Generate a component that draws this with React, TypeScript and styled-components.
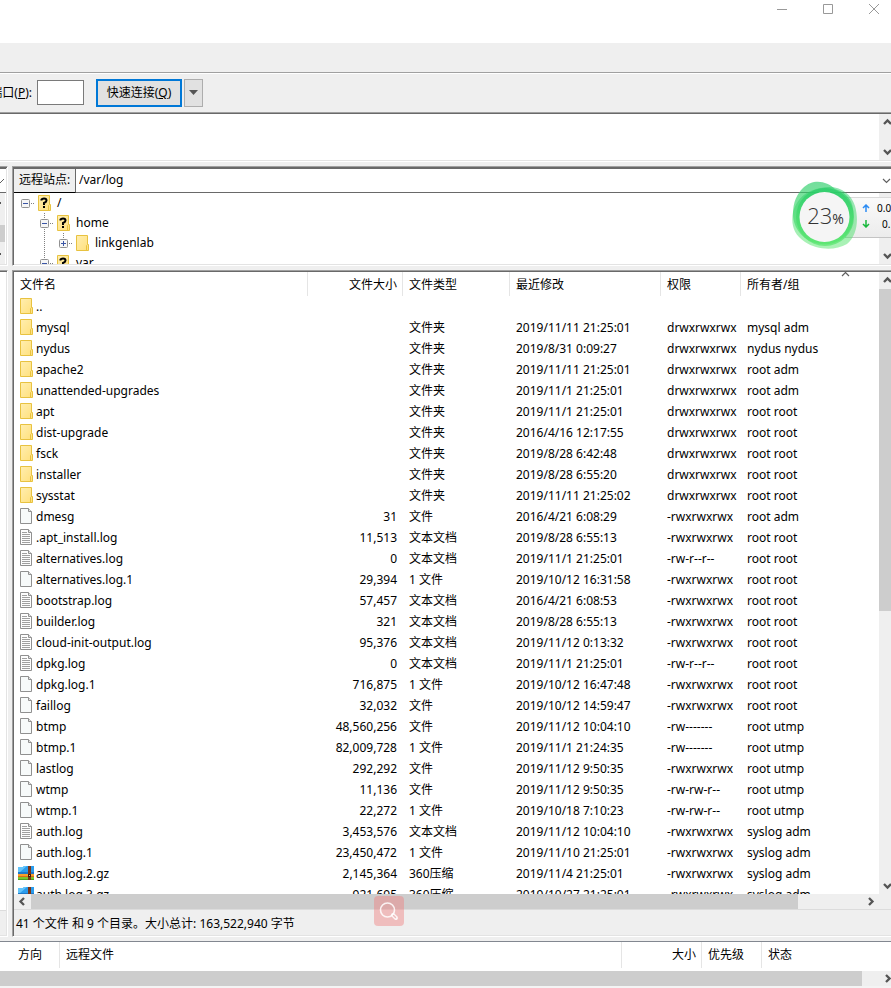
import React from "react";
import styled, { createGlobalStyle, css } from "styled-components";

const GlobalStyle = createGlobalStyle`
  * { box-sizing: border-box; }
  html, body, #root { height: 100%; }
  body {
    margin: 0;
    overflow: hidden;
    background: #efefef;
    color: #000;
    font: 12px/20px "Noto Sans", "Noto Sans CJK SC", sans-serif;
  }
  button, input { font: inherit; color: inherit; }
  svg { display: block; flex: none; }
`;

const Window = styled.div`
  position: relative;
  display: flex;
  flex-direction: column;
  height: 100vh;
  overflow: hidden;
  white-space: nowrap;
`;

const TitleBar = styled.header`
  flex: none;
  display: flex;
  justify-content: flex-end;
  height: 43px;
  overflow: hidden;
  background: #fff;
`;

const Captions = styled.div`
  display: flex;
  margin-right: -6px;
`;

const CaptionButton = styled.button`
  display: flex;
  justify-content: center;
  width: 46px;
  height: 18px;
  padding: 4px 0 0;
  border: 0;
  background: none;
`;

const ToolStrip = styled.div`
  flex: none;
  height: 30px;
  border-bottom: 1px solid #a0a0a0;
`;

const QuickConnect = styled.form`
  flex: none;
  display: flex;
  align-items: center;
  height: 39px;
  padding-bottom: 1px;
  border-top: 1px solid #fff;
`;

const PortLabel = styled.label`
  display: flex;
  justify-content: flex-end;
  width: 32px;
  overflow: hidden;
`;

const PortInput = styled.input`
  width: 47px;
  height: 25px;
  margin: 0 12px 0 5px;
  border: 1px solid #7a7a7a;
  background: #fff;
`;

const ConnectButton = styled.button`
  width: 86px;
  height: 28px;
  padding: 0;
  border: 2px solid #0078d7;
  background: #e1e1e1;
  line-height: 22px;
`;

const HistoryButton = styled.button`
  display: flex;
  align-items: center;
  justify-content: center;
  width: 19px;
  height: 28px;
  margin-left: 2px;
  padding: 0;
  border: 1px solid #adadad;
  background: #e1e1e1;
`;

const MessageLog = styled.section`
  flex: none;
  display: flex;
  justify-content: flex-end;
  height: 50px;
  background: #fff;
  border-top: 1px solid #a0a0a0;
  border-bottom: 1px solid #fff;
  box-shadow: inset 0 1px #696969, inset 0 -1px #e3e3e3;
  padding: 1px 0;
`;

const Scroller = styled.div`
  flex: none;
  display: flex;
  flex-direction: column;
  justify-content: space-between;
  width: 12px;
  overflow: hidden;
  background: #efefef;
`;

const ArrowButton = styled.button<{ $wide?: boolean }>`
  flex: none;
  display: flex;
  align-items: center;
  justify-content: flex-start;
  width: 17px;
  height: ${(p) => (p.$wide ? 15 : 17)}px;
  padding: 0 0 0 4px;
  border: 0;
  background: none;
`;

const VerticalThumb = styled.div`
  flex: none;
  height: 322px;
  margin-bottom: auto;
  background: #cdcdcd;
`;

const Workspace = styled.main`
  flex: 1;
  min-height: 0;
  display: grid;
  grid-template-columns: 8px minmax(0, 1fr);
  grid-template-rows: 100px minmax(0, 1fr);
  gap: 4px;
  padding: 4px 0;
`;

const paneEdge = css`
  border-top: 1px solid #a0a0a0;
  border-bottom: 1px solid #fff;
`;

const LocalPane = styled.section`
  ${paneEdge}
  display: flex;
  flex-direction: column;
  overflow: hidden;
  padding: 1px 1px 1px 0;
  border-right: 1px solid #fff;
  background: #fff;
  box-shadow: inset 0 1px #696969, inset 0 -1px #e3e3e3, inset -1px 0 #e3e3e3;
`;

const LocalCombo = styled.div`
  flex: none;
  height: 25px;
  padding-top: 9px;
  border-top: 1px solid #696969;
  border-bottom: 1px solid #696969;
`;

const LocalScroll = styled.div`
  flex: 1;
  display: flex;
  flex-direction: column;
  width: 5px;
  padding-top: 9px;
  background: #efefef;
`;

const LocalThumb = styled.div`
  height: 17px;
  margin: 21px 0 11px;
  background: #cdcdcd;
`;

const LocalList = styled.div`
  flex: 1;
`;

const LocalStatus = styled.div`
  flex: none;
  height: 25px;
  border-top: 1px solid #dcdcdc;
  background: #efefef;
`;

const RemotePane = styled.section`
  ${paneEdge}
  display: flex;
  flex-direction: column;
  overflow: hidden;
  min-width: 0;
  padding: 1px 0 1px 1px;
  border-left: 1px solid #a0a0a0;
  background: #fff;
  box-shadow: inset 0 1px #696969, inset 1px 0 #696969, inset 0 -1px #e3e3e3;
`;

const SiteBar = styled.div`
  flex: none;
  display: flex;
  height: 25px;
  border-top: 1px solid #696969;
`;

const SiteLabel = styled.label`
  width: 62px;
  padding-left: 5px;
  border-right: 1px solid #696969;
  border-bottom: 1px solid #000;
  background: #efefef;
  line-height: 22px;
`;

const SiteInput = styled.input`
  flex: 1;
  min-width: 0;
  height: 24px;
  padding: 0 3px 2px;
  border: 0;
  border-bottom: 1px solid #696969;
  outline: 0;
  background: #fff;
`;

const SiteToggle = styled.button`
  width: 9px;
  padding: 0;
  overflow: hidden;
  border: 0;
  border-bottom: 1px solid #696969;
  background: #fff;
`;

const TreeArea = styled.div`
  flex: 1;
  min-height: 0;
  display: flex;
`;

const Tree = styled.ul`
  flex: 1;
  margin: 0;
  padding: 0 0 0 2px;
  overflow: hidden;
  list-style: none;
`;

const TreeRow = styled.li`
  display: flex;
  align-items: center;
  height: 20px;
`;

const TreeIcon = styled.span`
  margin: 0 6px 0 3px;
`;

const ListArea = styled.div`
  flex: 1;
  min-height: 0;
  display: flex;
`;

const ListView = styled.div`
  flex: 1;
  min-width: 0;
  overflow: hidden;
`;

const FileTable = styled.table`
  width: 100%;
  border-collapse: separate;
  border-spacing: 0;
  table-layout: fixed;
`;

const Column = styled.col<{ $width?: number }>`
  ${(p) => p.$width && `width: ${p.$width}px;`}
`;

const HeadCell = styled.th<{ $right?: boolean; $last?: boolean }>`
  position: relative;
  height: 24px;
  padding: 1px 5px 0 6px;
  border-right: ${(p) => (p.$last ? "0" : "1px solid #e5e5e5")};
  font-weight: 400;
  text-align: ${(p) => (p.$right ? "right" : "left")};
`;

const SortMark = styled.span`
  position: absolute;
  top: -2px;
  left: 100px;
`;

const Cell = styled.td<{ $right?: boolean }>`
  height: 21px;
  padding: 0 6px;
  overflow: hidden;
  text-align: ${(p) => (p.$right ? "right" : "left")};
`;

const FileName = styled.div`
  display: flex;
  align-items: flex-start;
`;

const IconSlot = styled.span<{ $wide: boolean }>`
  flex: none;
  width: 18px;
  margin-left: -2px;
  padding: ${(p) => (p.$wide ? "2px 0 0" : "1px 0 0 2px")};
`;

const HorizontalScroller = styled.div`
  flex: none;
  display: flex;
  height: 15px;
  background: #efefef;
`;

const HorizontalThumb = styled.div`
  flex: 1;
  background: #cdcdcd;
`;

const ScrollTrack = styled.div<{ $width: number }>`
  width: ${(p) => p.$width}px;
`;

const StatusLine = styled.div`
  flex: none;
  height: 26px;
  padding-left: 2px;
  border-top: 1px solid #dcdcdc;
  background: #efefef;
  line-height: 27px;
`;

const Queue = styled.section`
  flex: none;
  border-top: 1px solid #828790;
  border-bottom: 2px solid #f4f4f4;
  background: #fff;
`;

const QueueTable = styled(FileTable)`
  margin-bottom: 3px;
`;

const QueueCell = styled(HeadCell)`
  height: 26px;
  padding-top: 0;
`;

const DirectionCell = styled(QueueCell)`
  padding-left: 18px;
`;

const SpeedPanel = styled.aside`
  position: absolute;
  top: 197px;
  right: 0;
  width: 46px;
  height: 41px;
  padding: 2px 0 0 17px;
  overflow: hidden;
  border-top: 1px solid #dadada;
  border-bottom: 1px solid #c4c4c4;
  background: linear-gradient(#fafafa, #ececec);
  font: 10px/16px "Noto Sans", sans-serif;
`;

const SpeedRow = styled.div`
  display: flex;
  align-items: center;
`;

const SpeedValue = styled.span<{ $indent: number }>`
  margin-left: ${(p) => p.$indent}px;
`;

const Ball = styled.div`
  position: absolute;
  top: 180px;
  right: 32px;
  width: 68px;
  height: 70px;
`;

const BallText = styled.div`
  position: absolute;
  inset: 0;
  display: flex;
  align-items: baseline;
  justify-content: center;
  padding: 20px 0 0 1px;
  color: #333;
  font: 300 22px/30px "Open Sans", "Noto Sans", sans-serif;
`;

const Percent = styled.span`
  font: 400 14px/20px "Open Sans", sans-serif;
`;

const SearchBadge = styled.button`
  position: absolute;
  bottom: 62px;
  left: 374px;
  width: 30px;
  height: 30px;
  padding: 5px;
  border: 0;
  border-radius: 4px;
  background: rgba(240, 128, 128, 0.45);
`;

type Dir = "up" | "down" | "left" | "right";
const chevrons: Record<Dir, string> = {
  up: "M1 6 L4.500 2.500 L8 6",
  down: "M1 3 L4.500 6.500 L8 3",
  left: "M6 1 L2.500 4.500 L6 8",
  right: "M3 1 L6.500 4.500 L3 8",
};

const Chevron = ({ dir, thin }: { dir: Dir; thin?: boolean }) => (
  <svg width="9" height="9" fill="none" stroke={thin ? "#606060" : "#555"} strokeWidth={thin ? 1.2 : 2.3}>
    <path d={chevrons[dir]} />
  </svg>
);

const ArrowTip = () => (
  <svg width="1" height="2"><path d="M0 0H1V2H0z" fill="#555" /></svg>
);

const Folder = ({ unknown }: { unknown?: boolean }) => (
  <svg width="13" height="16">
    <defs>
      <linearGradient id="folder" x2="1" y2="1">
        <stop offset="0" stopColor="#ffeeb0" />
        <stop offset="1" stopColor="#ffe07c" />
      </linearGradient>
    </defs>
    <path d="M.5.5h11v9h1v6H.5z" fill="url(#folder)" stroke="#e8c240" />
    <path d="M10.500 15.500v-5l1-1" fill="none" stroke="#e8c240" />
    {unknown && (
      <g fill="none" stroke="#000" strokeWidth="2">
        <path d="M3.500 5.500V4.500Q4 3.500 6 3.500Q8.500 3.500 8.500 5.500Q8.500 7 6 8V10" />
        <path d="M6 11v2" />
      </g>
    )}
  </svg>
);

const Sheet = ({ lines }: { lines?: boolean }) => (
  <svg width="13" height="16">
    <path d="M.5.500H8.500L11.500 3.500V15.500H.5z" fill={lines ? "#fdfdfd" : "#f7fafa"} stroke="#909090" />
    <path d="M8.500.500V3.500H11.500" fill="#e4e4e4" stroke="#909090" />
    {lines && <path d="M2 3.500H7M2 5.500H10M2 7.500H10M2 9.500H10M2 11.500H10M2 13.500H10" stroke="#a0a0a0" />}
  </svg>
);

const Archive = () => (
  <svg width="16" height="14">
    <path d="M0 1H5L6 0H16V6H0z" fill="#2b9cec" />
    <path d="M0 1H5L6 0H9L2 6H0z" fill="#62c4fa" />
    <path d="M0 6H16V8H0z" fill="#1d78c8" />
    <path d="M0 8H16V10H0z" fill="#f8a02c" />
    <path d="M0 10H16V11H0z" fill="#dd6c16" />
    <path d="M0 11H16V14H0z" fill="#7cc52c" />
    <path d="M0 13H16V14H0z" fill="#4d9c1c" />
    <path d="M10 0H13V14H10z" fill="#7b3516" />
    <path d="M10 8H13V11H10z" fill="#401a0a" />
    <path d="M11 9H12V10H11z" fill="#e8c070" />
  </svg>
);

const Expander = ({ plus, above, below }: { plus?: boolean; above?: boolean; below?: boolean }) => (
  <svg width="19" height="20">
    <g stroke="#808080" strokeDasharray="1 1">
      <path d="M15 10.500H21" />
      {above && <path d="M9.500 0V5" />}
      {below && <path d="M9.500 16V20" />}
    </g>
    <rect x="5.500" y="6.500" width="8" height="8" rx="1" fill="#f6f6f6" stroke="#919191" />
    <path d={plus ? "M7 10.500H12M9.500 8V13" : "M7 10.500H12"} stroke="#3a55a5" />
  </svg>
);

const Guide = ({ line }: { line?: boolean }) => (
  <svg width="19" height="20">
    {line && <path d="M9.500 0V20" stroke="#808080" strokeDasharray="1 1" />}
  </svg>
);

type Kind = "dir" | "file" | "text" | "gz";
type Entry = [Kind, string, string, string, string, string, string];

const rwx = "-rwxrwxrwx";
const drwx = "drwxrwxrwx";
const entries: Entry[] = [
  ["dir", "..", "", "", "", "", ""],
  ["dir", "mysql", "", "文件夹", "2019/11/11 21:25:01", drwx, "mysql adm"],
  ["dir", "nydus", "", "文件夹", "2019/8/31 0:09:27", drwx, "nydus nydus"],
  ["dir", "apache2", "", "文件夹", "2019/11/11 21:25:01", drwx, "root adm"],
  ["dir", "unattended-upgrades", "", "文件夹", "2019/11/1 21:25:01", drwx, "root adm"],
  ["dir", "apt", "", "文件夹", "2019/11/1 21:25:01", drwx, "root root"],
  ["dir", "dist-upgrade", "", "文件夹", "2016/4/16 12:17:55", drwx, "root root"],
  ["dir", "fsck", "", "文件夹", "2019/8/28 6:42:48", drwx, "root root"],
  ["dir", "installer", "", "文件夹", "2019/8/28 6:55:20", drwx, "root root"],
  ["dir", "sysstat", "", "文件夹", "2019/11/11 21:25:02", drwx, "root root"],
  ["file", "dmesg", "31", "文件", "2016/4/21 6:08:29", rwx, "root adm"],
  ["text", ".apt_install.log", "11,513", "文本文档", "2019/8/28 6:55:13", rwx, "root root"],
  ["text", "alternatives.log", "0", "文本文档", "2019/11/1 21:25:01", "-rw-r--r--", "root root"],
  ["file", "alternatives.log.1", "29,394", "1 文件", "2019/10/12 16:31:58", rwx, "root root"],
  ["text", "bootstrap.log", "57,457", "文本文档", "2016/4/21 6:08:53", rwx, "root root"],
  ["text", "builder.log", "321", "文本文档", "2019/8/28 6:55:13", rwx, "root root"],
  ["text", "cloud-init-output.log", "95,376", "文本文档", "2019/11/12 0:13:32", rwx, "root root"],
  ["text", "dpkg.log", "0", "文本文档", "2019/11/1 21:25:01", "-rw-r--r--", "root root"],
  ["file", "dpkg.log.1", "716,875", "1 文件", "2019/10/12 16:47:48", rwx, "root root"],
  ["file", "faillog", "32,032", "文件", "2019/10/12 14:59:47", rwx, "root root"],
  ["file", "btmp", "48,560,256", "文件", "2019/11/12 10:04:10", "-rw-------", "root utmp"],
  ["file", "btmp.1", "82,009,728", "1 文件", "2019/11/1 21:24:35", "-rw-------", "root utmp"],
  ["file", "lastlog", "292,292", "文件", "2019/11/12 9:50:35", rwx, "root utmp"],
  ["file", "wtmp", "11,136", "文件", "2019/11/12 9:50:35", "-rw-rw-r--", "root utmp"],
  ["file", "wtmp.1", "22,272", "1 文件", "2019/10/18 7:10:23", "-rw-rw-r--", "root utmp"],
  ["text", "auth.log", "3,453,576", "文本文档", "2019/11/12 10:04:10", rwx, "syslog adm"],
  ["file", "auth.log.1", "23,450,472", "1 文件", "2019/11/10 21:25:01", rwx, "syslog adm"],
  ["gz", "auth.log.2.gz", "2,145,364", "360压缩", "2019/11/4 21:25:01", rwx, "syslog adm"],
  ["gz", "auth.log.3.gz", "921,695", "360压缩", "2019/10/27 21:25:01", rwx, "syslog adm"],
];

const icons: Record<Kind, React.ReactNode> = {
  dir: <Folder />,
  file: <Sheet />,
  text: <Sheet lines />,
  gz: <Archive />,
};

export default function App() {
  return (
    <Window>
      <GlobalStyle />
      <TitleBar>
        <Captions>
          <CaptionButton aria-label="最小化">
            <svg width="10" height="10"><path d="M0 5.500H10" stroke="#999" /></svg>
          </CaptionButton>
          <CaptionButton aria-label="最大化">
            <svg width="10" height="10"><path d="M.5.500H9.500V9.500H.5z" fill="none" stroke="#999" /></svg>
          </CaptionButton>
          <CaptionButton aria-label="关闭">
            <svg width="10" height="10"><path d="M0 0L10 10M10 0L0 10" stroke="#999" /></svg>
          </CaptionButton>
        </Captions>
      </TitleBar>
      <ToolStrip />
      <QuickConnect onSubmit={(e) => e.preventDefault()}>
        <PortLabel htmlFor="port"><span>端口(<u>P</u>):</span></PortLabel>
        <PortInput id="port" />
        <ConnectButton type="submit">快速连接(<u>Q</u>)</ConnectButton>
        <HistoryButton type="button" aria-label="历史记录">
          <svg width="9" height="5"><path d="M0 0H9L4.500 5z" fill="#555" /></svg>
        </HistoryButton>
      </QuickConnect>
      <MessageLog>
        <Scroller>
          <ArrowButton aria-label="向上"><Chevron dir="up" /></ArrowButton>
          <ArrowButton aria-label="向下"><Chevron dir="down" /></ArrowButton>
        </Scroller>
      </MessageLog>

      <Workspace>
        <LocalPane>
          <LocalCombo>
            <svg width="4" height="6"><path d="M0 5L4 1" stroke="#606060" /></svg>
          </LocalCombo>
          <LocalScroll><ArrowTip /><LocalThumb /><ArrowTip /></LocalScroll>
        </LocalPane>

        <RemotePane>
          <SiteBar>
            <SiteLabel htmlFor="site">远程站点:</SiteLabel>
            <SiteInput id="site" defaultValue="/var/log" />
            <SiteToggle aria-label="展开"><Chevron dir="down" thin /></SiteToggle>
          </SiteBar>
          <TreeArea>
            <Tree>
              <TreeRow><Expander /><TreeIcon><Folder unknown /></TreeIcon>/</TreeRow>
              <TreeRow><Guide /><Expander above below /><TreeIcon><Folder unknown /></TreeIcon>home</TreeRow>
              <TreeRow><Guide /><Guide line /><Expander plus above /><TreeIcon><Folder /></TreeIcon>linkgenlab</TreeRow>
              <TreeRow><Guide /><Expander above /><TreeIcon><Folder unknown /></TreeIcon>var</TreeRow>
            </Tree>
            <Scroller>
              <ArrowButton aria-label="向上"><Chevron dir="up" /></ArrowButton>
              <ArrowButton aria-label="向下"><Chevron dir="down" /></ArrowButton>
            </Scroller>
          </TreeArea>
        </RemotePane>

        <LocalPane>
          <LocalList />
          <LocalStatus />
        </LocalPane>

        <RemotePane>
          <ListArea>
            <ListView>
              <FileTable>
                <colgroup>
                  <Column $width={294} />
                  <Column $width={95} />
                  <Column $width={107} />
                  <Column $width={151} />
                  <Column $width={80} />
                  <Column />
                </colgroup>
                <thead>
                  <tr>
                    <HeadCell>文件名</HeadCell>
                    <HeadCell $right>文件大小</HeadCell>
                    <HeadCell>文件类型</HeadCell>
                    <HeadCell>最近修改</HeadCell>
                    <HeadCell>权限</HeadCell>
                    <HeadCell $last>
                      所有者/组
                      <SortMark><Chevron dir="up" thin /></SortMark>
                    </HeadCell>
                  </tr>
                </thead>
                <tbody>
                  {entries.map(([kind, name, size, type, date, mode, owner]) => (
                    <tr key={name}>
                      <Cell><FileName><IconSlot $wide={kind === "gz"}>{icons[kind]}</IconSlot>{name}</FileName></Cell>
                      <Cell $right>{size}</Cell>
                      <Cell>{type}</Cell>
                      <Cell>{date}</Cell>
                      <Cell>{mode}</Cell>
                      <Cell>{owner}</Cell>
                    </tr>
                  ))}
                </tbody>
              </FileTable>
            </ListView>
            <Scroller>
              <ArrowButton aria-label="向上"><Chevron dir="up" /></ArrowButton>
              <VerticalThumb />
              <ArrowButton aria-label="向下"><Chevron dir="down" /></ArrowButton>
            </Scroller>
          </ListArea>
          <HorizontalScroller>
            <ArrowButton $wide aria-label="向左"><Chevron dir="left" /></ArrowButton>
            <HorizontalThumb />
            <ScrollTrack $width={64} />
            <ArrowButton $wide aria-label="向右"><Chevron dir="right" /></ArrowButton>
            <ScrollTrack $width={12} />
          </HorizontalScroller>
          <StatusLine>41 个文件 和 9 个目录。大小总计: 163,522,940 字节</StatusLine>
        </RemotePane>
      </Workspace>

      <Queue>
        <QueueTable>
          <colgroup>
            <Column $width={60} />
            <Column />
            <Column $width={80} />
            <Column $width={60} />
            <Column $width={129} />
          </colgroup>
          <thead>
            <tr>
              <DirectionCell>方向</DirectionCell>
              <QueueCell>远程文件</QueueCell>
              <QueueCell $right>大小</QueueCell>
              <QueueCell>优先级</QueueCell>
              <QueueCell $last>状态</QueueCell>
            </tr>
          </thead>
        </QueueTable>
        <HorizontalScroller>
          <HorizontalThumb />
          <ScrollTrack $width={17} />
          <Scroller><ArrowButton $wide aria-label="向右"><Chevron dir="right" /></ArrowButton></Scroller>
        </HorizontalScroller>
      </Queue>

      <SpeedPanel>
        <SpeedRow>
          <svg width="8" height="8" fill="none" stroke="#2c8cf4" strokeWidth="1.500"><path d="M4 8V1M1 4L4 1L7 4" /></svg>
          <SpeedValue $indent={7}>0.0</SpeedValue>
        </SpeedRow>
        <SpeedRow>
          <svg width="8" height="8" fill="none" stroke="#18b83c" strokeWidth="1.500"><path d="M4 0V7M1 4L4 7L7 4" /></svg>
          <SpeedValue $indent={12}>0.</SpeedValue>
        </SpeedRow>
      </SpeedPanel>
      <Ball>
        <svg width="68" height="70">
          <defs>
            <linearGradient id="ring" x2="0" y2="1">
              <stop offset="0" stopColor="#28cc68" />
              <stop offset="1" stopColor="#58e66c" />
            </linearGradient>
          </defs>
          <g fill="url(#ring)">
            <path opacity=".65" d="M12 8C22-2 36 1 44 9C60 14 64 26 62 40C60 56 46 66 30 64C12 62 2 48 2 34C2 22 6 14 12 8Z" />
            <path opacity=".5" d="M30 8C46 4 60 12 64 26C68 40 66 56 56 64C44 71 26 70 14 62C2 54 0 44 2 32C6 18 16 10 30 8Z" />
            <circle cx="34" cy="37" r="29" opacity=".7" />
          </g>
          <circle cx="33.500" cy="37" r="25" fill="#f5f5f5" />
        </svg>
        <BallText>23<Percent>%</Percent></BallText>
      </Ball>
      <SearchBadge aria-label="搜索">
        <svg width="20" height="20" fill="none" stroke="#fff" strokeOpacity=".85">
          <circle cx="8.500" cy="9" r="7" strokeWidth="1.600" />
          <path d="M14 14L17 17" strokeWidth="4" strokeLinecap="round" />
          <path d="M14.500 14.500L16.500 16.500" stroke="#eebcbc" strokeOpacity="1" strokeWidth="1.400" strokeLinecap="round" />
        </svg>
      </SearchBadge>
    </Window>
  );
}
